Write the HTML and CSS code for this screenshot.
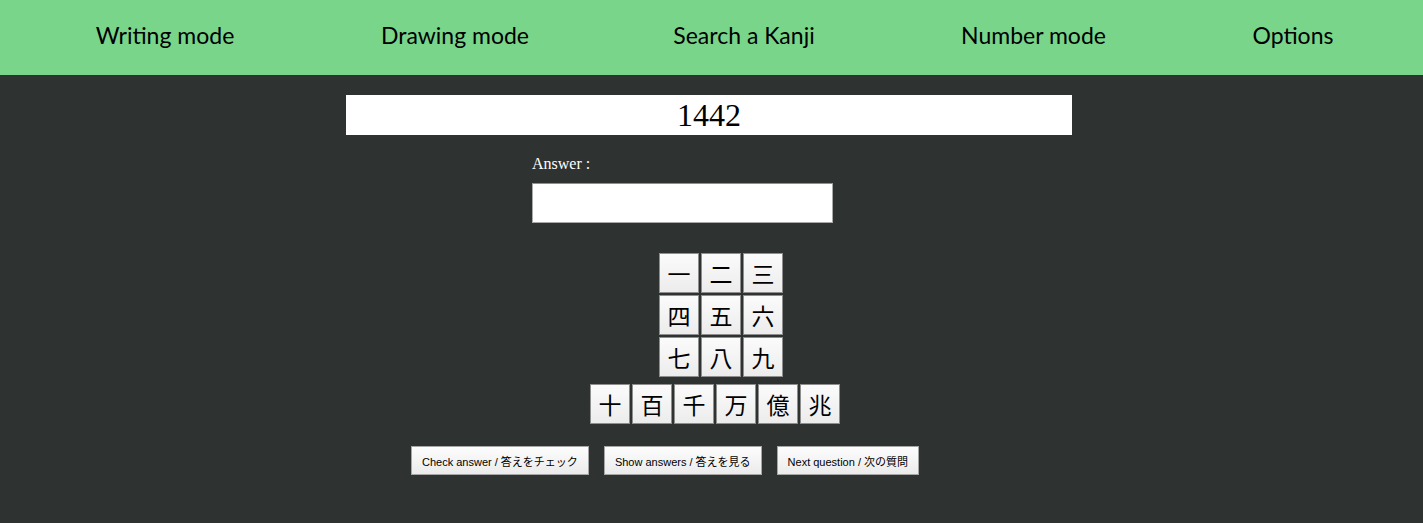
FILE: index.html
```html
<!DOCTYPE html>
<html lang="en">
<head>
<meta charset="utf-8">
<title>Number mode</title>
<link rel="stylesheet" href="styles.css">
</head>
<body>
<nav class="topbar">
  <a class="nav-item nav-1" href="#">Writing mode</a>
  <a class="nav-item nav-2" href="#">Drawing mode</a>
  <a class="nav-item nav-3" href="#">Search a Kanji</a>
  <a class="nav-item nav-4" href="#">Number mode</a>
  <a class="nav-item nav-5" href="#">Options</a>
</nav>
<main class="main">
  <div class="question">1442</div>
  <div class="answer-block">
    <label class="answer-label" for="answer">Answer :</label>
    <input class="answer-input" id="answer" type="text">
  </div>
  <div class="pad">
    <div class="pad-row pad-digits">
      <button class="key">一</button><button class="key">二</button><button class="key">三</button>
    </div>
    <div class="pad-row pad-digits">
      <button class="key">四</button><button class="key">五</button><button class="key">六</button>
    </div>
    <div class="pad-row pad-digits">
      <button class="key">七</button><button class="key">八</button><button class="key">九</button>
    </div>
    <div class="pad-row pad-units">
      <button class="key">十</button><button class="key">百</button><button class="key">千</button><button class="key">万</button><button class="key">億</button><button class="key">兆</button>
    </div>
  </div>
  <div class="actions">
    <button class="action">Check answer / 答えをチェック</button>
    <button class="action">Show answers / 答えを見る</button>
    <button class="action">Next question / 次の質問</button>
  </div>
</main>
</body>
</html>
```
FILE: styles.css
```css
html, body {
  margin: 0;
  padding: 0;
}
body {
  background: #2e3230;
  height: 523px;
  overflow: hidden;
  font-family: "Liberation Serif", serif;
}
.topbar {
  display: flex;
  align-items: center;
  height: 75px;
  padding-left: 20px;
  background: #79d58a;
  box-sizing: border-box;
}
.nav-item {
  display: block;
  text-align: center;
  color: #000;
  text-decoration: none;
  font-family: "Lato", "Open Sans", sans-serif;
  font-size: 23px;
  line-height: 30px;
  padding-bottom: 6px;
}
.nav-1 { width: 290px; }
.nav-2 { width: 290px; }
.nav-3 { width: 288px; }
.nav-4 { width: 291px; }
.nav-5 { width: 228px; }

.main {
  width: 726px;
  margin-left: 346px;
  padding-top: 20px;
}
.question {
  height: 40px;
  background: #fff;
  color: #000;
  text-align: center;
  font-family: "Liberation Serif", serif;
  font-size: 32px;
  line-height: 40px;
}
.answer-block {
  display: flex;
  flex-direction: column;
  align-items: flex-start;
  padding-left: 186px;
  padding-top: 20px;
}
.answer-label {
  color: #fff;
  font-family: "Liberation Serif", serif;
  font-size: 16px;
  line-height: 18px;
  height: 18px;
}
.answer-input {
  margin-top: 10px;
  width: 301px;
  height: 40px;
  box-sizing: border-box;
  border: 1px solid #a9a9a9;
  border-top-color: #8f8f8f;
  background: #fff;
  padding: 2px 4px;
  font-size: 16px;
}
.pad {
  display: flex;
  flex-direction: column;
  align-items: flex-start;
  gap: 2px;
  margin-top: 30px;
}
.pad-digits {
  margin-left: 313px;
}
.pad-units {
  margin-left: 244px;
  margin-top: 5px;
}
.pad-row {
  display: flex;
  gap: 2px;
}
.key {
  width: 40px;
  height: 40px;
  box-sizing: border-box;
  margin: 0;
  padding: 0;
  border: 1px solid #8e8e8e;
  background: linear-gradient(#fbfbfb, #ececec);
  color: #000;
  font-family: "Noto Sans CJK JP", sans-serif;
  font-size: 23px;
  line-height: 36px;
}
.actions {
  display: flex;
  gap: 15px;
  margin-top: 22px;
  margin-left: 65px;
}
.action {
  height: 29px;
  box-sizing: border-box;
  margin: 0;
  padding: 0 10px;
  border: 1px solid #a6a6a6;
  background: linear-gradient(#fdfdfd, #ebebeb);
  color: #000;
  font-family: "Liberation Sans", "Noto Sans CJK JP", sans-serif;
  font-size: 11px;
  white-space: nowrap;
}
```
